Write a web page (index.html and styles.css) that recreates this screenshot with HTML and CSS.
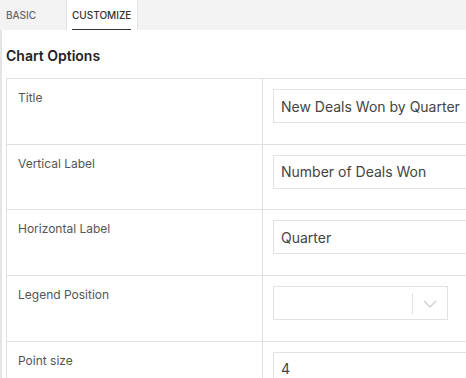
FILE: index.html
```html
<!DOCTYPE html>
<html lang="en">
<head>
    <meta charset="UTF-8">
    <title>Chart Options</title>
    <link rel="stylesheet" href="styles.css">
</head>
<body>
    <div class="tabs">
        <div class="tab">BASIC</div>
        <div class="tab active"><span>CUSTOMIZE</span></div>
        <div class="tab-fill"></div>
    </div>
    <div class="panel">
        <div class="section-title">Chart Options</div>
        <table class="options">
            <tr>
                <td class="label">Title</td>
                <td class="field"><input class="text-input" type="text" value="New Deals Won by Quarter"></td>
            </tr>
            <tr>
                <td class="label">Vertical Label</td>
                <td class="field"><input class="text-input" type="text" value="Number of Deals Won"></td>
            </tr>
            <tr>
                <td class="label">Horizontal Label</td>
                <td class="field"><input class="text-input" type="text" value="Quarter"></td>
            </tr>
            <tr>
                <td class="label">Legend Position</td>
                <td class="field">
                    <div class="select">
                        <div class="select-value"></div>
                        <div class="select-sep"></div>
                        <div class="select-arrow">
                            <svg width="14" height="8" viewBox="0 0 14 8"><path d="M1 1 L7 7 L13 1" fill="none" stroke="#ccc" stroke-width="1.2"/></svg>
                        </div>
                    </div>
                </td>
            </tr>
            <tr>
                <td class="label">Point size</td>
                <td class="field"><input class="text-input" type="text" value="4"></td>
            </tr>
        </table>
    </div>
</body>
</html>
```

FILE: styles.css
```css
html, body {
    margin: 0;
    padding: 0;
    overflow: hidden;
}
body {
    font-family: Inter, "Noto Sans", sans-serif;
    color: #333;
    background-color: white;
    width: 466px;
    height: 378px;
}
.tabs {
    display: flex;
    height: 30px;
    background-color: #f3f3f3;
}
.tab {
    font-size: 10px;
    font-weight: 500;
    color: #666;
    padding: 0 6px;
    width: 54px;
    line-height: 30px;
    border-right: 1px solid #e2e2e2;
}
.tab.active {
    background-color: white;
    color: #333;
    width: 60px;
    padding: 0 5px;
}
.tab.active span {
    display: inline-block;
    line-height: 28px;
    border-bottom: 1.5px solid #333;
}
.tab-fill {
    flex: 1;
}
.panel {
    border-left: 2px solid #e5e5e5;
    padding: 17px 0 0 4px;
    height: 400px;
}
.section-title {
    font-size: 14px;
    font-weight: 600;
    color: #222;
    margin-bottom: 14px;
}
.options {
    border-collapse: collapse;
    width: 560px;
}
.options td {
    border: 1px solid #e0e0e0;
    height: 65.7px;
    box-sizing: border-box;
    vertical-align: top;
}
.label {
    width: 256px;
    padding: 11px 11px;
    font-size: 12px;
    color: #555;
}
.field {
    padding: 10px;
}
.text-input {
    width: 100%;
    box-sizing: border-box;
    height: 34px;
    border: 1px solid #e2e2e2;
    padding: 0 7px;
    font-family: Inter, "Noto Sans", sans-serif;
    font-size: 14px;
    color: #444;
    outline: none;
}
.select {
    display: flex;
    align-items: center;
    width: 175px;
    height: 34px;
    box-sizing: border-box;
    border: 1px solid #e2e2e2;
}
.select-value {
    flex: 1;
}
.select-sep {
    width: 1px;
    height: 21px;
    background-color: #e2e2e2;
}
.select-arrow {
    width: 34px;
    display: flex;
    justify-content: center;
    padding-top: 2px;
}
```
